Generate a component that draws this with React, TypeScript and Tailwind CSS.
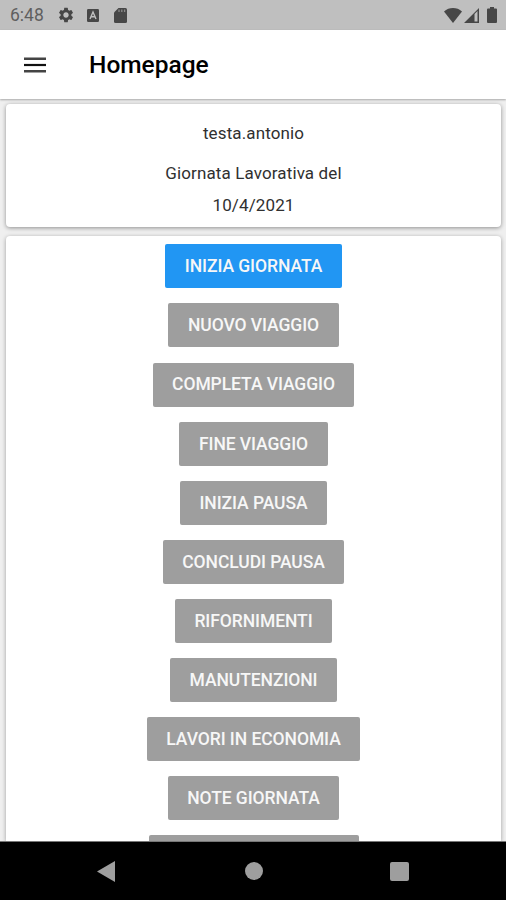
import { clsx, type ClassValue } from 'clsx';
import { MdSettings } from 'react-icons/md';
import { twMerge } from 'tailwind-merge';

function cn(...inputs: ClassValue[]) {
  return twMerge(clsx(inputs));
}

interface Action {
  label: string;
  active?: boolean;
}

const actions: Action[] = [
  { label: 'Inizia giornata', active: true },
  { label: 'Nuovo viaggio' },
  { label: 'Completa viaggio' },
  { label: 'Fine viaggio' },
  { label: 'Inizia pausa' },
  { label: 'Concludi pausa' },
  { label: 'Rifornimenti' },
  { label: 'Manutenzioni' },
  { label: 'Lavori in economia' },
  { label: 'Note giornata' },
];

function StatusBar() {
  return (
    <div className="flex h-[30px] shrink-0 items-center justify-between bg-[#bfbfbf] pr-[8px] pl-[10px] text-[#474747]">
      <div className="flex items-center">
        <span className="w-[47px] pt-[2px] text-[17.5px] leading-none text-[#5f5f5f]">6:48</span>
        <MdSettings className="size-[18px]" />
        <svg viewBox="0 0 12 13" className="ml-[12px] h-[13px] w-[12px]">
          <rect width="12" height="13" rx="1.2" fill="currentColor" />
          <path d="M3 10 6 3l3 7M4.2 7.7h3.6" fill="none" stroke="#bfbfbf" strokeWidth="1.4" />
        </svg>
        <svg viewBox="0 0 13 15" className="ml-[15px] h-[15px] w-[13px]">
          <path d="M4.5 0H11.5A1.5 1.5 0 0 1 13 1.5V13.5A1.5 1.5 0 0 1 11.5 15H1.5A1.5 1.5 0 0 1 0 13.5V4.5Z" fill="currentColor" />
          <path d="M5 1.5V4M7.8 1.5V4M10.6 1.5V4" stroke="#8a8a8a" strokeWidth="1.3" />
        </svg>
      </div>
      <div className="flex items-center">
        <svg viewBox="0 0 18 15" className="h-[15px] w-[18px]">
          <path d="M0 3.5C5-1.1 13-1.1 18 3.5L9 15Z" fill="currentColor" />
        </svg>
        <svg viewBox="0 0 15 15" className="ml-[2px] h-[15px] w-[15px]">
          <path d="M0 15 15 0V15ZM10.5 6V13.5H13.5V3Z" fill="currentColor" fillRule="evenodd" />
        </svg>
        <svg viewBox="0 0 10 16" className="mr-px ml-[8px] h-[16px] w-[10px]">
          <path d="M3 0H7V1.5H9A1 1 0 0 1 10 2.5V15A1 1 0 0 1 9 16H1A1 1 0 0 1 0 15V2.5A1 1 0 0 1 1 1.5H3Z" fill="currentColor" />
        </svg>
      </div>
    </div>
  );
}

function AppBar() {
  return (
    <header className="z-10 flex h-[69px] shrink-0 items-center bg-white pl-[24px] shadow-[0_1px_2px_rgba(0,0,0,0.3)]">
      <button title="Menu">
        <svg viewBox="0 0 22 16" className="h-[16px] w-[22px]">
          <path d="M0 1.7H22M0 14.3H22" stroke="#444" strokeWidth="2.5" />
          <path d="M0 8H22" stroke="#111" strokeWidth="2.2" />
        </svg>
      </button>
      <h1 className="ml-[43px] pt-[2px] text-[24.5px] leading-none font-medium text-black">Homepage</h1>
    </header>
  );
}

function ActionButton({ label, active }: Action) {
  return (
    <button
      className={cn(
        'h-11 shrink-0 rounded-[2px] bg-[#9e9e9e] px-[19.5px] text-[17.5px] font-medium tracking-[-0.07px] whitespace-nowrap text-[#f7f7f7] uppercase',
        active && 'bg-[#2196f3]'
      )}
    >
      {label}
    </button>
  );
}

function NavigationBar() {
  return (
    <nav className="flex h-[59px] shrink-0 items-center border-t border-[#777] bg-black pl-[97px] text-[#9e9e9e]">
      <svg viewBox="0 0 18 21" className="h-[21px] w-[18px]">
        <path d="M0 10.5 18 0V21Z" fill="currentColor" />
      </svg>
      <span className="ml-[130px] size-[18px] rounded-full bg-[#9e9e9e]" />
      <span className="ml-[127px] size-[19px] rounded-[2px] bg-[#9e9e9e]" />
    </nav>
  );
}

export default function App() {
  return (
    <div className="flex h-[900px] w-[506px] flex-col overflow-hidden bg-[#efefef] font-[Roboto,sans-serif]">
      <StatusBar />
      <AppBar />
      <main className="flex min-h-0 flex-1 flex-col overflow-hidden pt-[5px] pr-[5px] pl-[6px]">
        <section className="flex h-[123px] shrink-0 flex-col items-center rounded-[4px] bg-white pt-[16px] text-[17px] tracking-[0.12px] text-[#303030] shadow-[0_1px_4px_rgba(0,0,0,0.4)]">
          <p className="leading-[26px]">testa.antonio</p>
          <p className="mt-[11px] leading-[32px]">Giornata Lavorativa del</p>
          <p className="leading-[32px]">10/4/2021</p>
        </section>
        <section className="mt-[9px] flex min-h-0 flex-1 flex-col items-center gap-[15.1px] rounded-t-[4px] bg-white pt-[8.4px] shadow-[0_1px_4px_rgba(0,0,0,0.35)]">
          {actions.map((action) => (
            <ActionButton key={action.label} {...action} />
          ))}
          {/* top edge of the next button, still below the fold */}
          <div className="h-11 w-[210px] shrink-0 rounded-[2px] bg-[#9e9e9e]" />
        </section>
      </main>
      <NavigationBar />
    </div>
  );
}
